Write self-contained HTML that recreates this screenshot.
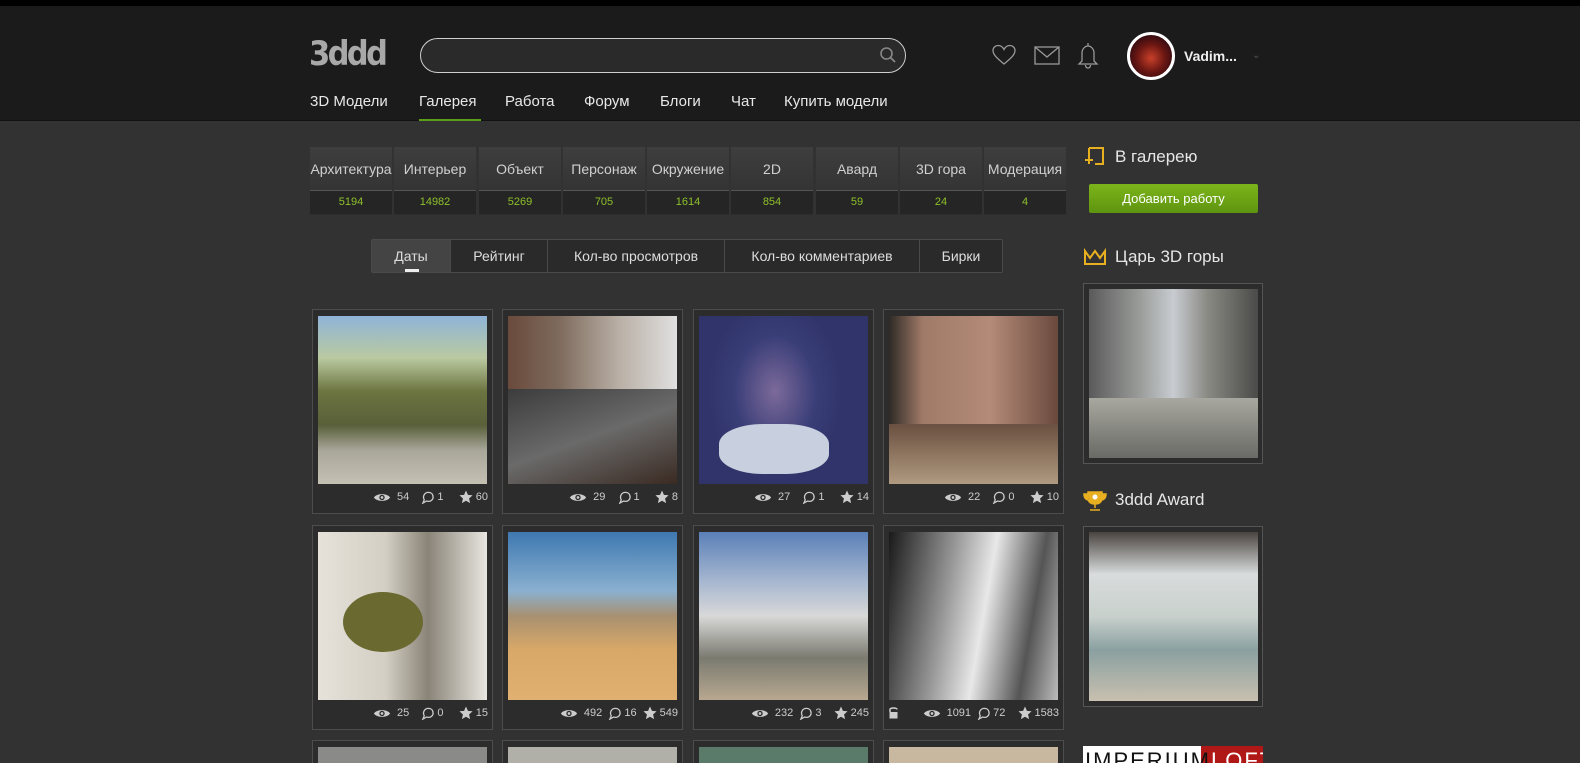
<!DOCTYPE html>
<html style="width:1580px;height:763px;overflow:hidden"><head><meta charset="utf-8"><style>
*{box-sizing:border-box;margin:0;padding:0}
html,body{width:1580px;height:763px;overflow:hidden}
body{background:#323232;font-family:"Liberation Sans",sans-serif;color:#ddd;position:relative}
.a{position:absolute}
.top{left:0;top:0;width:1580px;height:6px;background:#000}
.hdr{left:0;top:6px;width:1580px;height:115px;background:#1b1b1b;border-bottom:1px solid #111}
.logo{left:309px;top:34px;font-size:34px;font-weight:bold;color:#a8a8a8;letter-spacing:-3px;font-family:"DejaVu Sans",sans-serif;transform:scaleX(0.9);transform-origin:left}
.search{left:420px;top:38px;width:486px;height:35px;border:1.5px solid #cfcfcf;border-radius:18px;background:#2a2a2a}
.nav{top:93px;font-size:15px;color:#e8e8e8}
.cat{top:147px;width:82px;height:68px;background:linear-gradient(#3e3e3e,#2e2e2e);font-size:14px;color:#d0d0d0;text-align:center}
.cat .t{height:44px;line-height:45px;border-bottom:1px solid #555;white-space:nowrap;overflow:hidden}
.cat .n{height:23px;line-height:23px;font-size:11px;color:#8dc12a;background:#252525}
.sort{left:371px;top:239px;width:632px;height:34px;border:1px solid #4a4a4a;border-radius:2px;background:#2a2a2a;display:flex;font-size:14px;color:#ddd}
.sort div{line-height:32px;text-align:center;border-right:1px solid #4a4a4a}
.card{width:181px;height:205px;border:1px solid #4d4d4d;background:#2c2c2c}
.card .im{position:absolute;left:5px;top:6px;width:169px;height:168px}
.st{position:absolute;right:4px;top:180px;font-size:11px;color:#ccc;display:flex;align-items:center;gap:3px;white-space:nowrap}
.st svg{display:block}
.rt{font-size:17px;color:#e6e6e6}
.rbox{left:1083px;width:180px;height:181px;border:1px solid #555;background:#2c2c2c}
.rbox div{position:absolute;left:5px;top:5px;width:169px;height:169px}
.clip{left:0;top:740px;width:1580px;height:23px;overflow:hidden}
</style></head><body>
<div class="a top"></div>
<div class="a hdr"></div>
<div class="a logo">3ddd</div>
<div class="a search"><svg class="a" style="right:8px;top:7px" width="18" height="18" viewBox="0 0 18 18"><circle cx="7.5" cy="7.5" r="5.5" fill="none" stroke="#888" stroke-width="1.6"/><path d="M11.5 11.5L16 16" stroke="#888" stroke-width="1.8"/></svg></div>
<svg class="a" style="left:991px;top:43px" width="26" height="24" viewBox="0 0 26 24"><path d="M13 21C7 16 2 12 2 7.5 2 4.5 4.5 2.5 7.3 2.5 10 2.5 12 4.5 13 6.5 14 4.5 16 2.5 18.7 2.5 21.5 2.5 24 4.5 24 7.5 24 12 19 16 13 21Z" fill="none" stroke="#999" stroke-width="1.3"/></svg>
<svg class="a" style="left:1034px;top:46px" width="26" height="19" viewBox="0 0 26 19"><rect x="1" y="1" width="24" height="17" fill="none" stroke="#999" stroke-width="1.3"/><path d="M1 1L13 11 25 1" fill="none" stroke="#999" stroke-width="1.3"/></svg>
<svg class="a" style="left:1077px;top:41px" width="22" height="28" viewBox="0 0 22 28"><path d="M11 2v3M5 20V12C5 8 8 5 11 5S17 8 17 12V20L20 23H2L5 20ZM8.5 24c0 2 1.2 3 2.5 3s2.5-1 2.5-3" fill="none" stroke="#999" stroke-width="1.3"/></svg>
<div class="a" style="left:1127px;top:32px;width:48px;height:48px;border-radius:50%;border:3px solid #fff;background:radial-gradient(circle at 50% 55%,#c8402a,#6a1612 45%,#2a0a10 80%)"></div>
<div class="a" style="left:1184px;top:48px;font-size:14px;font-weight:bold;color:#eee">Vadim...</div>
<div class="a" style="left:1252px;top:50px;font-size:10px;color:#555">⌄</div>
<div class="a nav" style="left:310px">3D Модели</div>
<div class="a nav" style="left:419px">Галерея</div>
<div class="a" style="left:419px;top:119px;width:62px;height:2px;background:#5a9e1a"></div>
<div class="a nav" style="left:505px">Работа</div>
<div class="a nav" style="left:584px">Форум</div>
<div class="a nav" style="left:660px">Блоги</div>
<div class="a nav" style="left:731px">Чат</div>
<div class="a nav" style="left:784px">Купить модели</div>

<div class="a cat" style="left:310px"><div class="t">Архитектура</div><div class="n">5194</div></div>
<div class="a cat" style="left:394px"><div class="t">Интерьер</div><div class="n">14982</div></div>
<div class="a cat" style="left:479px"><div class="t">Объект</div><div class="n">5269</div></div>
<div class="a cat" style="left:563px"><div class="t">Персонаж</div><div class="n">705</div></div>
<div class="a cat" style="left:647px"><div class="t">Окружение</div><div class="n">1614</div></div>
<div class="a cat" style="left:731px"><div class="t">2D</div><div class="n">854</div></div>
<div class="a cat" style="left:816px"><div class="t">Авард</div><div class="n">59</div></div>
<div class="a cat" style="left:900px"><div class="t">3D гора</div><div class="n">24</div></div>
<div class="a cat" style="left:984px"><div class="t">Модерация</div><div class="n">4</div></div>

<div class="a sort"><div style="width:79px;background:#444;position:relative">Даты<span style="position:absolute;left:33px;bottom:0;width:14px;height:3px;background:#eee"></span></div><div style="width:97px">Рейтинг</div><div style="width:177px">Кол-во просмотров</div><div style="width:195px">Кол-во комментариев</div><div style="width:82px;border:none">Бирки</div></div>

<svg width="0" height="0" style="position:absolute"><defs>
<symbol id="eye" viewBox="0 0 20 12"><path d="M1 6C4 1 16 1 19 6 16 11 4 11 1 6Z" fill="#ccc"/><circle cx="10" cy="6" r="3" fill="#2c2c2c"/><circle cx="10" cy="6" r="1.5" fill="#ccc"/></symbol>
<symbol id="cm" viewBox="0 0 14 14"><path d="M2 13L3.5 9.5C1.5 6 3.5 1.5 8 1.5 11 1.5 13 3.5 13 6.5 13 10 9.5 12 6 10.8Z" fill="none" stroke="#ccc" stroke-width="1.4"/></symbol>
<symbol id="star" viewBox="0 0 16 16"><path d="M8 .5L10.2 5.5 15.5 6 11.5 9.7 12.7 15 8 12.3 3.3 15 4.5 9.7 .5 6 5.8 5.5Z" fill="#ccc"/></symbol>
</defs></svg>

<div class="a card" style="left:312px;top:309px"><div class="im" style="background:linear-gradient(#8fb4d8 0%,#b9c9a0 25%,#6c7440 45%,#59603a 65%,#a9a69a 80%,#c4c0b4 100%)"></div><div class="st"><svg width="18" height="11"><use href="#eye"/></svg>&nbsp;54&nbsp;&nbsp;&nbsp;<svg width="13" height="13"><use href="#cm"/></svg>1&nbsp;&nbsp;&nbsp;&nbsp;<svg width="14" height="14"><use href="#star"/></svg>60</div></div>
<div class="a card" style="left:502px;top:309px"><div class="im" style="background:linear-gradient(90deg,#6a4a3c 0%,#7d6a5c 30%,#b8aea4 65%,#e0e0e0 100%);"><div style="position:absolute;left:0;bottom:0;width:169px;height:95px;background:linear-gradient(160deg,#3c3c3c,#6a6a6a 50%,#3a2a22)"></div></div><div class="st"><svg width="18" height="11"><use href="#eye"/></svg>&nbsp;29&nbsp;&nbsp;&nbsp;<svg width="13" height="13"><use href="#cm"/></svg>1&nbsp;&nbsp;&nbsp;&nbsp;<svg width="14" height="14"><use href="#star"/></svg>8</div></div>
<div class="a card" style="left:693px;top:309px"><div class="im" style="background:radial-gradient(ellipse 40% 55% at 45% 45%,#7c6a9a,#3a3e78 60%,#30346a)"><div style="position:absolute;left:20px;bottom:10px;width:110px;height:50px;background:#c8d0e0;border-radius:40%"></div></div><div class="st"><svg width="18" height="11"><use href="#eye"/></svg>&nbsp;27&nbsp;&nbsp;&nbsp;<svg width="13" height="13"><use href="#cm"/></svg>1&nbsp;&nbsp;&nbsp;&nbsp;<svg width="14" height="14"><use href="#star"/></svg>14</div></div>
<div class="a card" style="left:883px;top:309px"><div class="im" style="background:linear-gradient(90deg,#2e2a26 0%,#a07a68 20%,#b48a78 60%,#6a4a3e 100%)"><div style="position:absolute;left:0;bottom:0;width:169px;height:60px;background:linear-gradient(#6a5040,#b09a80)"></div></div><div class="st"><svg width="18" height="11"><use href="#eye"/></svg>&nbsp;22&nbsp;&nbsp;&nbsp;<svg width="13" height="13"><use href="#cm"/></svg>0&nbsp;&nbsp;&nbsp;&nbsp;<svg width="14" height="14"><use href="#star"/></svg>10</div></div>
<div class="a card" style="left:312px;top:525px"><div class="im" style="background:linear-gradient(90deg,#e6e2da 0%,#d4cfc4 40%,#8a8478 65%,#e8e6e0 100%)"><div style="position:absolute;left:25px;top:60px;width:80px;height:60px;background:#6a6a30;border-radius:50%"></div></div><div class="st"><svg width="18" height="11"><use href="#eye"/></svg>&nbsp;25&nbsp;&nbsp;&nbsp;<svg width="13" height="13"><use href="#cm"/></svg>0&nbsp;&nbsp;&nbsp;&nbsp;<svg width="14" height="14"><use href="#star"/></svg>15</div></div>
<div class="a card" style="left:502px;top:525px"><div class="im" style="background:linear-gradient(#3e78b0 0%,#8ab0d0 35%,#a89070 50%,#d8a868 70%,#e0b070 100%)"></div><div class="st"><svg width="18" height="11"><use href="#eye"/></svg>&nbsp;492&nbsp;<svg width="13" height="13"><use href="#cm"/></svg>16&nbsp;<svg width="14" height="14"><use href="#star"/></svg>549</div></div>
<div class="a card" style="left:693px;top:525px"><div class="im" style="background:linear-gradient(#5a80b8 0%,#a8b8d0 30%,#d8d8d8 50%,#7a7a70 75%,#b8a890 100%)"></div><div class="st"><svg width="18" height="11"><use href="#eye"/></svg>&nbsp;232&nbsp;<svg width="13" height="13"><use href="#cm"/></svg>3&nbsp;&nbsp;&nbsp;<svg width="14" height="14"><use href="#star"/></svg>245</div></div>
<div class="a card" style="left:883px;top:525px"><div class="im" style="background:linear-gradient(100deg,#1a1a1a 0%,#9a9a9a 35%,#e8e8e8 55%,#555 80%,#bbb 100%)"></div><svg class="a" style="left:5px;top:180px" width="9" height="13" viewBox="0 0 9 13"><path d="M1 6V3.5C1 1.5 8 1.5 8 3.5" fill="none" stroke="#ccc" stroke-width="1.5"/><rect x="0.5" y="6" width="8" height="6.5" fill="#ccc"/></svg><div class="st"><svg width="18" height="11"><use href="#eye"/></svg>&nbsp;1091&nbsp;<svg width="13" height="13"><use href="#cm"/></svg>72&nbsp;&nbsp;&nbsp;<svg width="14" height="14"><use href="#star"/></svg>1583</div></div>

<div class="a clip">
<div class="a card" style="left:312px;top:0"><div class="im" style="background:#8a8a88"></div></div>
<div class="a card" style="left:502px;top:0"><div class="im" style="background:#b0b0a8"></div></div>
<div class="a card" style="left:693px;top:0"><div class="im" style="background:#5a7a6a"></div></div>
<div class="a card" style="left:883px;top:0"><div class="im" style="background:#c8b8a0"></div></div>
<div class="a" style="left:1083px;top:6px;width:180px;height:17px;background:#fff;overflow:hidden"><div style="position:absolute;right:0;top:0;width:62px;height:17px;background:#b01818"></div><div style="position:absolute;left:2px;top:2px;font-size:22px;letter-spacing:2px;color:#111;white-space:nowrap">IMPERIUM<span style="color:#fff">LOFT</span></div></div>
</div>

<svg class="a" style="left:1083px;top:146px" width="22" height="22" viewBox="0 0 22 22"><path d="M6 2H20V18H12M6 2V10M2 14H10M6 10V18" fill="none" stroke="#e8b020" stroke-width="2"/></svg>
<div class="a rt" style="left:1115px;top:147px">В галерею</div>
<div class="a" style="left:1089px;top:184px;width:169px;height:29px;background:linear-gradient(#7cb51a,#5e9410);border-radius:2px;color:#fff;font-size:13px;text-align:center;line-height:29px">Добавить работу</div>
<svg class="a" style="left:1083px;top:248px" width="24" height="18" viewBox="0 0 24 18"><path d="M2 3L7 10 12 3 17 10 22 3V16H2Z" fill="none" stroke="#e8b020" stroke-width="2"/></svg>
<div class="a rt" style="left:1115px;top:247px">Царь 3D горы</div>
<div class="a rbox" style="top:283px"><div style="background:linear-gradient(90deg,#5a5a5a,#9a9c9a 30%,#c8ccd0 50%,#8a8a84 70%,#4a4a48);"><span style="position:absolute;left:0;bottom:0;width:169px;height:60px;background:linear-gradient(#a8a8a0,#6a6a66)"></span></div></div>
<svg class="a" style="left:1083px;top:490px" width="24" height="22" viewBox="0 0 24 22"><path d="M5 2H19V8C19 12 16 14 12 14 8 14 5 12 5 8ZM5 4H1C1 8 3 10 6 10M19 4H23C23 8 21 10 18 10M12 14V18M7 20H17" fill="#e8b020" stroke="#e8b020" stroke-width="1.5"/><circle cx="12" cy="7" r="2.5" fill="#fff"/></svg>
<div class="a rt" style="left:1115px;top:490px">3ddd Award</div>
<div class="a rbox" style="top:526px"><div style="background:linear-gradient(#4a4440 0%,#d8dcdc 25%,#c8d0cc 50%,#8aa0a0 70%,#c8c0b0 100%)"></div></div>
</body></html>
